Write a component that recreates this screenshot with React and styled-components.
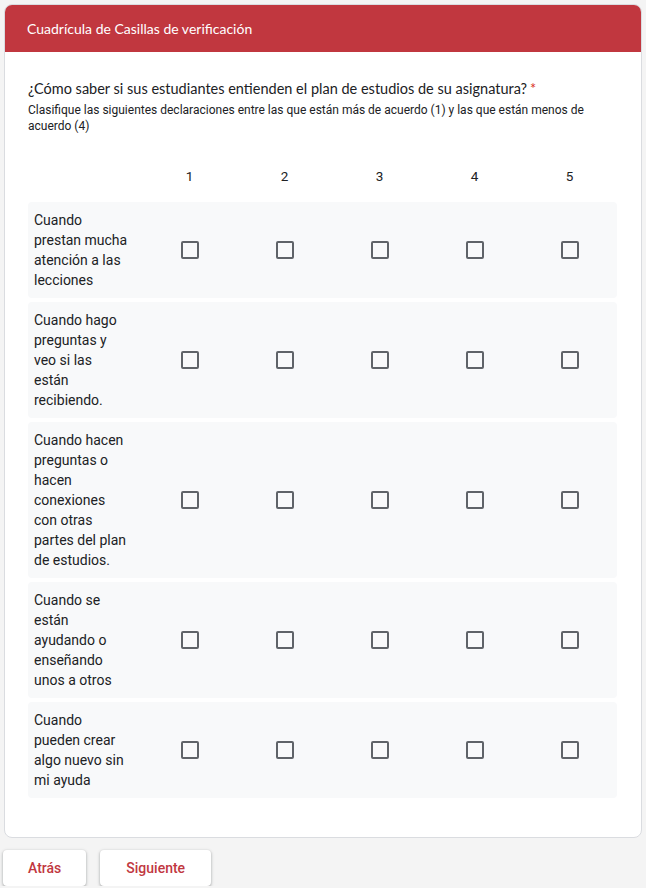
import React from "react";
import styled, { createGlobalStyle } from "styled-components";

const GlobalStyle = createGlobalStyle`
  body {
    margin: 0;
    background: #f4f4f4;
    font-family: Roboto, "Liberation Sans", Arial, sans-serif;
  }
`;

const Page = styled.div`
  padding: 4px 4px 0 4px;
  width: 638px;
`;

const Card = styled.div`
  background: #fff;
  border: 1px solid #dadce0;
  border-radius: 8px;
  overflow: hidden;
`;

const Header = styled.div`
  background: #c1373f;
  color: #fff;
  height: 47px;
  display: flex;
  align-items: center;
  padding: 0 22px;
  font-family: Lato, "Open Sans", sans-serif;
  font-size: 14px;
`;

const Body = styled.div`
  padding: 27px 23px 39px 23px;
`;

const Question = styled.div`
  font-family: Lato, "Open Sans", sans-serif;
  font-size: 14.5px;
  color: #202124;
  line-height: 20px;
`;

const Required = styled.span`
  color: #d93025;
  margin-left: 3px;
`;

const Description = styled.div`
  font-size: 12px;
  line-height: 16px;
  color: #202124;
  margin-top: 3px;
`;

const Grid = styled.div`
  margin-top: 33px;
  display: grid;
  grid-template-columns: 114px repeat(5, 95px);
  row-gap: 4px;
`;

const HeadRow = styled.div`
  display: contents;
`;

const ColLabel = styled.div`
  font-size: 13.5px;
  color: #202124;
  text-align: center;
  line-height: 18px;
  padding-bottom: 13px;
`;

const Row = styled.div`
  display: contents;
`;

const RowLabel = styled.div`
  background: #f8f9fa;
  font-size: 14px;
  line-height: 20px;
  color: #202124;
  padding: 8px 14px 8px 6px;
  border-radius: 4px 0 0 4px;
`;

const Cell = styled.div`
  background: #f8f9fa;
  display: flex;
  align-items: center;
  justify-content: center;
  border-radius: ${({ $last }) => ($last ? "0 4px 4px 0" : "0")};
`;

const Box = styled.div`
  width: 14px;
  height: 14px;
  border: 2px solid #5f6368;
  border-radius: 2px;
`;

const Buttons = styled.div`
  display: flex;
  gap: 14px;
  padding: 12px 0 0 0;
  margin-left: -1px;
`;

const Button = styled.div`
  background: #fff;
  border-radius: 4px;
  box-shadow: 0 1px 2px rgba(60, 64, 67, 0.3), 0 1px 3px 1px rgba(60, 64, 67, 0.15);
  height: 36px;
  padding: 0 ${({ $pad }) => $pad}px;
  display: flex;
  align-items: center;
  color: #c1373f;
  font-size: 14px;
  font-weight: 500;
`;

const cols = [1, 2, 3, 4, 5];
const rows = [
  "Cuando prestan mucha atención a las lecciones",
  "Cuando hago preguntas y veo si las están recibiendo.",
  "Cuando hacen preguntas o hacen conexiones con otras partes del plan de estudios.",
  "Cuando se están ayudando o enseñando unos a otros",
  "Cuando pueden crear algo nuevo sin mi ayuda",
];

export default function App() {
  return (
    <Page>
      <GlobalStyle />
      <Card>
        <Header>Cuadrícula de Casillas de verificación</Header>
        <Body>
          <Question>
            ¿Cómo saber si sus estudiantes entienden el plan de estudios de su asignatura?
            <Required>*</Required>
          </Question>
          <Description>
            Clasifique las siguientes declaraciones entre las que están más de acuerdo (1) y las que están menos de acuerdo (4)
          </Description>
          <Grid>
            <HeadRow>
              <div />
              {cols.map((c) => (
                <ColLabel key={c}>{c}</ColLabel>
              ))}
            </HeadRow>
            {rows.map((r, i) => (
              <Row key={i}>
                <RowLabel>{r}</RowLabel>
                {cols.map((c) => (
                  <Cell key={c} $last={c === 5}>
                    <Box />
                  </Cell>
                ))}
              </Row>
            ))}
          </Grid>
        </Body>
      </Card>
      <Buttons>
        <Button $pad={25}>Atrás</Button>
        <Button $pad={26}>Siguiente</Button>
      </Buttons>
    </Page>
  );
}
